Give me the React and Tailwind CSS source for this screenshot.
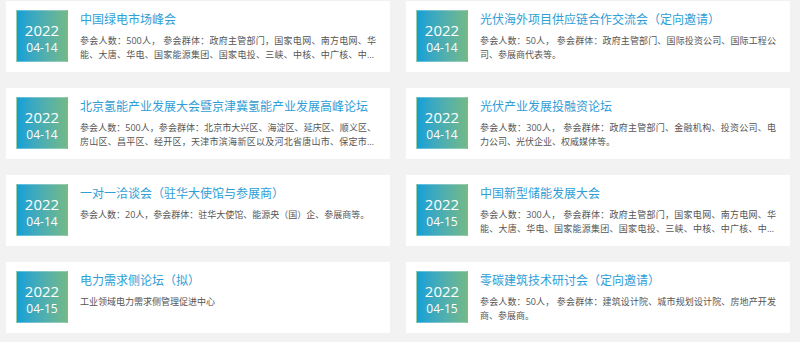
import React from 'react';

const events = [
  {
    year: '2022',
    date: '04-14',
    title: '中国绿电市场峰会',
    desc: '参会人数：500人， 参会群体：政府主管部门，国家电网、南方电网、华能、大唐、华电、国家能源集团、国家电投、三峡、中核、中广核、中国节能、中国电建、中国能建等。',
  },
  {
    year: '2022',
    date: '04-14',
    title: '光伏海外项目供应链合作交流会（定向邀请）',
    desc: '参会人数：50人， 参会群体：政府主管部门、国际投资公司、国际工程公司、参展商代表等。',
  },
  {
    year: '2022',
    date: '04-14',
    title: '北京氢能产业发展大会暨京津冀氢能产业发展高峰论坛',
    desc: '参会人数：500人，参会群体：北京市大兴区、海淀区、延庆区、顺义区、房山区、昌平区、经开区，天津市滨海新区以及河北省唐山市、保定市和张家口市等。',
  },
  {
    year: '2022',
    date: '04-14',
    title: '光伏产业发展投融资论坛',
    desc: '参会人数：300人， 参会群体：政府主管部门、金融机构、投资公司、电力公司、光伏企业、权威媒体等。',
  },
  {
    year: '2022',
    date: '04-14',
    title: '一对一洽谈会（驻华大使馆与参展商）',
    desc: '参会人数：20人，参会群体：驻华大使馆、能源央（国）企、参展商等。',
  },
  {
    year: '2022',
    date: '04-15',
    title: '中国新型储能发展大会',
    desc: '参会人数：300人， 参会群体：政府主管部门，国家电网、南方电网、华能、大唐、华电、国家能源集团、国家电投、三峡、中核、中广核、中国节能、中国电建、中国能建等。',
  },
  {
    year: '2022',
    date: '04-15',
    title: '电力需求侧论坛（拟）',
    desc: '工业领域电力需求侧管理促进中心',
  },
  {
    year: '2022',
    date: '04-15',
    title: '零碳建筑技术研讨会（定向邀请）',
    desc: '参会人数：50人， 参会群体：建筑设计院、城市规划设计院、房地产开发商、参展商。',
  },
];

const EventCard = ({ event }) => (
  <div className="flex h-[71px] bg-white pl-[10px] pr-[14px] pt-[9px]">
    {/* Date badge */}
    <div className="flex h-[52px] w-[52px] shrink-0 flex-col items-center border border-white/30 bg-linear-to-r from-[#0a9fd7] to-[#72b987] pt-[10px] text-white">
      <span className="text-[15px] leading-[18px]">{event.year}</span>
      <span className="text-[12px] leading-[18px]">{event.date}</span>
    </div>
    <div className="ml-[12px] min-w-0 flex-1">
      <div className="mt-[2px] truncate text-[12px] leading-[16px] text-[#2f9ed6]">{event.title}</div>
      <p className="mt-[6px] line-clamp-2 text-justify text-[9px] leading-[14px] text-[#555]">{event.desc}</p>
    </div>
  </div>
);

export default function App() {
  return (
    <div className="h-[342px] w-[800px] overflow-hidden bg-[#f2f2f2] pl-[6px] pr-[10px] pt-[1px] font-['Open_Sans','Noto_Sans_CJK_SC',sans-serif]">
      <div className="grid grid-cols-2 gap-x-4 gap-y-4">
        {events.map((event, i) => (
          <EventCard key={i} event={event} />
        ))}
      </div>
    </div>
  );
}
